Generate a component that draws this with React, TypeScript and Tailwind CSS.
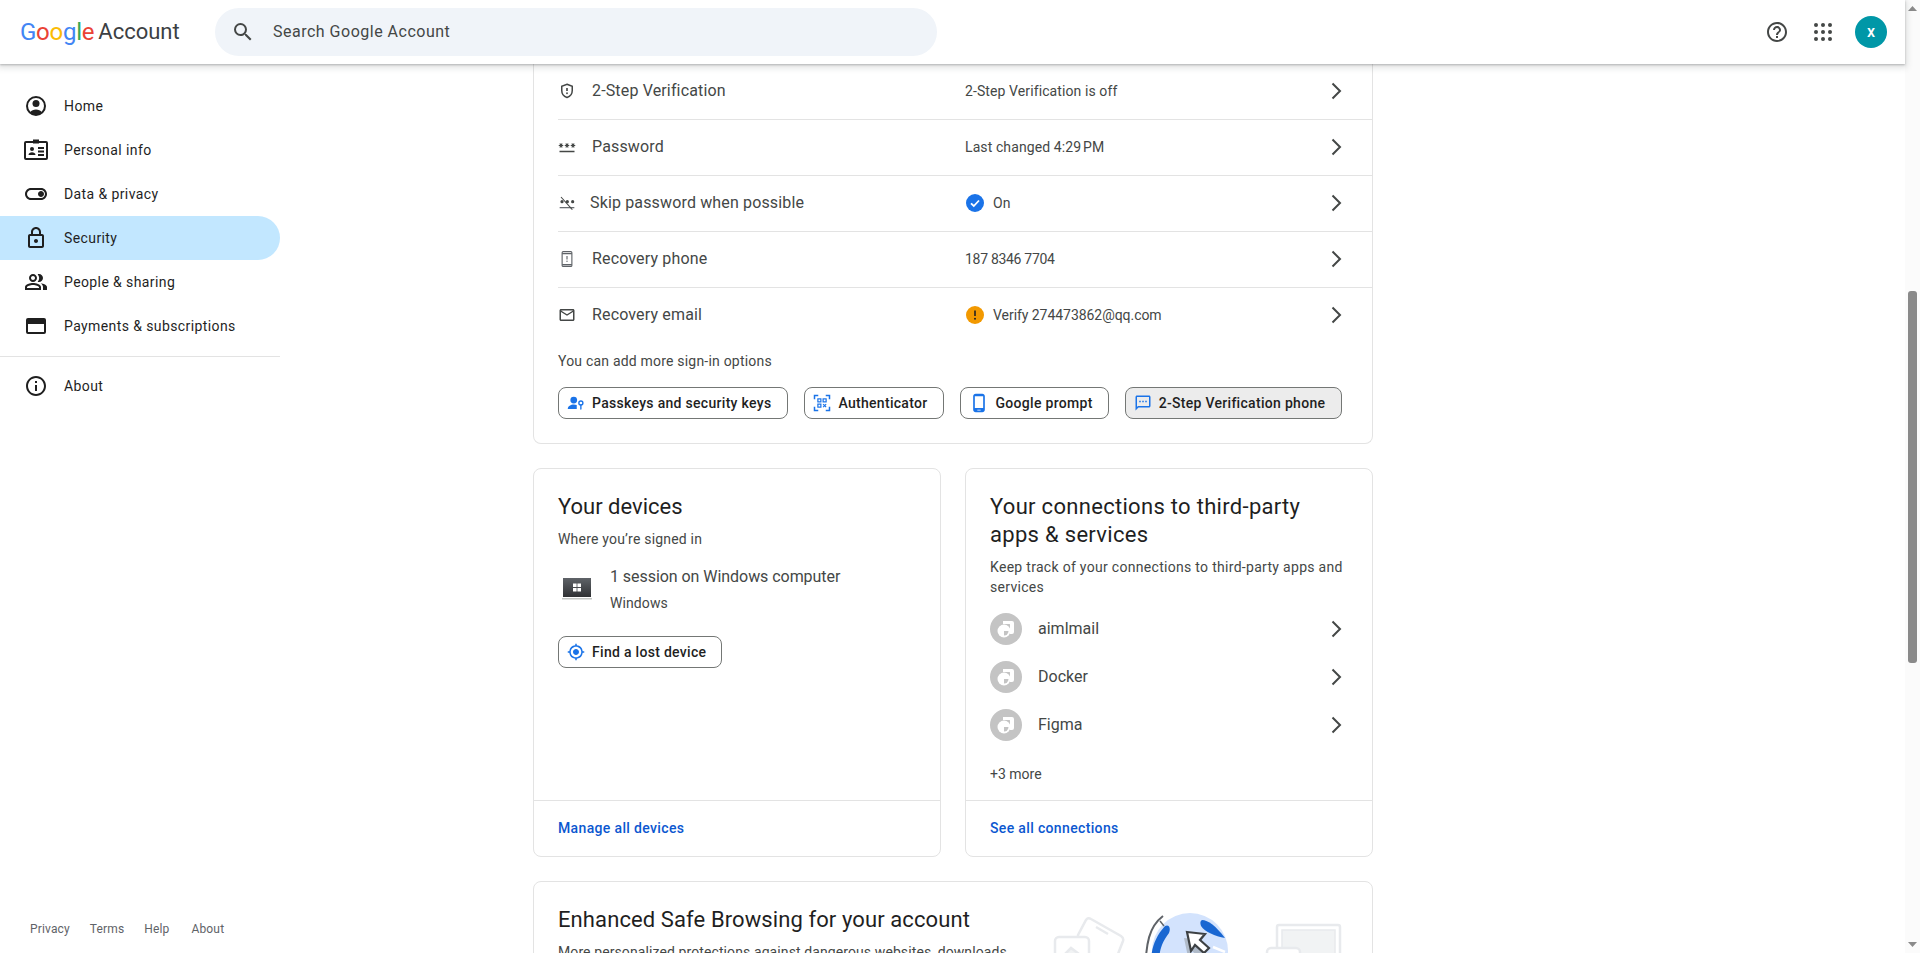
import { ReactNode } from "react";
import {
  MdSearch,
  MdHelpOutline,
  MdInfoOutline,
  MdOutlineLock,
  MdOutlineToggleOn,
  MdOutlinePeopleAlt,
  MdOutlinePassword,
  MdOutlineMailOutline,
  MdOutlineSms,
  MdOutlinePhoneAndroid,
  MdOutlineMyLocation,
} from "react-icons/md";

/* ---------- small drawn icons ---------- */

function HomeIcon() {
  return (
    <svg viewBox="0 0 24 24" className="w-6 h-6" fill="none">
      <circle cx="12" cy="12" r="9" stroke="#1f1f1f" strokeWidth="2" />
      <circle cx="12" cy="9.5" r="3.5" fill="#1f1f1f" />
      <path d="M6 18.2c1.5-1.7 3.6-2.7 6-2.7s4.500 1 6 2.700c-1.500 1.800-3.700 2.800-6 2.800s-4.500-1-6-2.800z" fill="#1f1f1f" />
    </svg>
  );
}

function IdCardIcon() {
  return (
    <svg viewBox="0 0 24 24" className="w-6 h-6" fill="none">
      <rect x="1" y="4" width="22" height="17" stroke="#1f1f1f" strokeWidth="2" rx="1" />
      <path d="M9 1.500h6v4H9z" fill="#1f1f1f" />
      <circle cx="8" cy="11" r="2" fill="#1f1f1f" />
      <path d="M4.500 17c0-1.800 1.800-2.800 3.500-2.800s3.500 1 3.500 2.800z" fill="#1f1f1f" />
      <path d="M14 10h6M14 13.500h6M14 17h6" stroke="#1f1f1f" strokeWidth="1.800" />
    </svg>
  );
}

function CardIcon() {
  return (
    <svg viewBox="0 0 24 24" className="w-6 h-6" fill="none">
      <rect x="3" y="5" width="18" height="14" stroke="#1f1f1f" strokeWidth="2" rx="1" />
      <rect x="3" y="5" width="18" height="5" fill="#1f1f1f" />
    </svg>
  );
}

function ShieldIcon() {
  return (
    <svg viewBox="0 0 24 24" className="w-[18px] h-[18px]" fill="none">
      <path d="M12 3l7 2.600v5.700c0 4.400-3 8-7 9.400-4-1.400-7-5-7-9.400V5.600z" stroke="#444746" strokeWidth="2" />
      <path d="M12 8v4" stroke="#444746" strokeWidth="2.200" />
      <circle cx="12" cy="15" r="1.200" fill="#444746" />
    </svg>
  );
}

function SkipPasswordIcon() {
  return (
    <svg viewBox="0 0 24 24" className="w-4 h-4" fill="none">
      <path d="M1 19h22" stroke="#5f6368" strokeWidth="1.800" />
      <circle cx="4.500" cy="10" r="2.400" fill="#444746" />
      <circle cx="12.500" cy="10" r="2.400" fill="#444746" />
      <circle cx="20.500" cy="10" r="2.400" fill="#444746" />
      <path d="M3 3l17 19" stroke="#444746" strokeWidth="1.600" />
    </svg>
  );
}

function PhoneAlertIcon() {
  return (
    <svg viewBox="0 0 24 24" className="w-[18px] h-[18px]" fill="none">
      <rect x="5.500" y="2" width="13" height="20" rx="1.500" stroke="#5f6368" strokeWidth="1.500" />
      <path d="M5.500 4.500h13M5.500 19.500h13" stroke="#5f6368" strokeWidth="2" />
      <path d="M12 8v4.500" stroke="#5f6368" strokeWidth="1.500" />
      <circle cx="12" cy="15" r="0.900" fill="#5f6368" />
    </svg>
  );
}

function Chevron() {
  return (
    <svg viewBox="0 0 24 24" className="w-6 h-6 shrink-0" fill="none">
      <path d="M8.500 4.500L16 12l-7.500 7.500" stroke="#444746" strokeWidth="2" />
    </svg>
  );
}

function GoogleApps() {
  return (
    <svg viewBox="0 0 24 24" className="w-6 h-6" fill="#444746">
      {[5, 12, 19].map((y) =>
        [5, 12, 19].map((x) => <circle key={`${x}-${y}`} cx={x} cy={y} r="2" />)
      )}
    </svg>
  );
}

function PasskeyIcon() {
  return (
    <svg viewBox="0 0 24 24" className="w-[18px] h-[18px]" fill="#1a73e8">
      <circle cx="9" cy="8" r="4.500" />
      <path d="M1 20c0-4 4-6 8-6 1.500 0 2.800.3 4 .8V20z" />
      <circle cx="18.500" cy="12" r="2.700" fill="none" stroke="#1a73e8" strokeWidth="1.800" />
      <path d="M17.600 14h1.800v6l-.9 1.200-.9-1.200z" />
    </svg>
  );
}

function AuthenticatorIcon() {
  return (
    <svg viewBox="0 0 24 24" className="w-[18px] h-[18px]" fill="none" stroke="#1a73e8" strokeWidth="2">
      <path d="M2 7V2h5M17 2h5v5M2 17v5h5M22 17v5h-5" />
      <rect x="6.500" y="6.500" width="4" height="4" strokeWidth="1.600" />
      <rect x="13.500" y="6.500" width="4" height="4" strokeWidth="1.600" />
      <rect x="6.500" y="13.500" width="4" height="4" strokeWidth="1.600" />
      <path d="M13.500 13.500l4 4M17.500 13.500l-4 4" strokeWidth="1.600" />
    </svg>
  );
}

function CheckBadge() {
  return (
    <svg viewBox="0 0 18 18" className="ml-px w-[18px] h-[18px] shrink-0">
      <circle cx="9" cy="9" r="9" fill="#1a73e8" />
      <path d="M5 9.300l2.800 2.700L13 6.500" fill="none" stroke="#fff" strokeWidth="1.800" />
    </svg>
  );
}

function WarnBadge() {
  return (
    <svg viewBox="0 0 18 18" className="ml-px w-[18px] h-[18px] shrink-0">
      <circle cx="9" cy="9" r="9" fill="#f29900" />
      <path d="M9 4.500v5.500" stroke="#202124" strokeWidth="1.600" />
      <circle cx="9" cy="12.800" r="1" fill="#202124" />
    </svg>
  );
}

function LaptopIcon() {
  return (
    <svg viewBox="0 0 30 22" className="w-[30px] h-[22px]">
      <defs>
        <linearGradient id="lap" x1="0" y1="0" x2="0" y2="1">
          <stop offset="0" stopColor="#5f6368" />
          <stop offset="1" stopColor="#2f3134" />
        </linearGradient>
      </defs>
      <rect x="1" y="0" width="28" height="19" fill="url(#lap)" />
      <rect x="0" y="20" width="30" height="1.500" fill="#c4c7c5" />
      <path d="M11 5.500h3.600v3.600H11zM15.400 5.500H19v3.600h-3.600zM11 9.900h3.600v3.600H11zM15.400 9.900H19v3.600h-3.600z" fill="#fff" />
    </svg>
  );
}

function AppBadge() {
  return (
    <svg viewBox="0 0 32 32" className="w-8 h-8 shrink-0">
      <circle cx="16" cy="16" r="16" fill="#c4c4c4" />
      <path d="M13 8h9a2 2 0 012 2v9a2 2 0 01-2 2h-2v-9.500a.500.500 0 00-.500-.500H13z" fill="#fff" />
      <circle cx="14" cy="18" r="6.500" fill="#fff" />
      <path d="M14 18h4.500a4.500 4.500 0 01-4.500 4.500z" fill="#c4c4c4" />
    </svg>
  );
}

function SafeBrowsingArt() {
  return (
    <svg viewBox="0 0 300 71" className="w-[300px] h-[71px] shrink-0" fill="none">
      {/* left documents */}
      <g stroke="#e8eaed" strokeWidth="2.500">
        <path d="M25 23L33 8q2-3 5-1l30 17q3 2 2 5L58 60H25z" fill="#fff" />
        <path d="M43 15l12 7" />
        <rect x="2" y="25" width="34" height="60" rx="4" fill="#fff" />
        <path d="M10 44l8-8 8 6v30H10z" fill="#f1f3f4" />
      </g>
      {/* globe */}
      <circle cx="137" cy="39" r="38" fill="#d3e3fd" />
      <path d="M112 14c4-2 6 2 4 7-6 8-10 16-10 30H98c0-14 4-26 14-37z" fill="#1967d2" />
      <path d="M149 8c6 0 14 6 23 18-10-2-20-6-24-12-1-3-1-5 1-6z" fill="#1967d2" />
      <path d="M110 4C97 14 92 28 92 71" stroke="#5f6368" strokeWidth="2" />
      <path d="M111 14l-4-5" stroke="#5f6368" strokeWidth="1.500" />
      <path d="M131 26l18 2-5 6 9 8-5 5-9-8-4 6z" fill="#9aa0a6" opacity="0.6" />
      <path d="M134 20l18 2-5 6 9 8-5 5-9-8-4 6z" fill="#fff" stroke="#3c4043" strokeWidth="2.200" />
      <path d="M160 35l12 5" stroke="#fff" strokeWidth="2.500" />
      {/* monitor */}
      <g stroke="#e8eaed" strokeWidth="2.500">
        <rect x="224" y="13" width="63" height="70" rx="2" fill="#fff" />
        <rect x="229" y="18" width="53" height="60" fill="#f1f3f4" strokeWidth="1.500" />
        <rect x="214" y="36" width="33" height="44" rx="4" fill="#fff" />
      </g>
    </svg>
  );
}

/* ---------- data ---------- */

const navItems: { label: string; icon: ReactNode; active?: boolean }[] = [
  { label: "Home", icon: <HomeIcon /> },
  { label: "Personal info", icon: <IdCardIcon /> },
  { label: "Data & privacy", icon: <MdOutlineToggleOn className="w-7 h-7 text-[#1f1f1f]" /> },
  { label: "Security", icon: <MdOutlineLock className="w-6 h-6 text-[#1f1f1f]" />, active: true },
  { label: "People & sharing", icon: <MdOutlinePeopleAlt className="w-6 h-6 text-[#1f1f1f]" /> },
  { label: "Payments & subscriptions", icon: <CardIcon /> },
];

function NavRow({ label, icon, active }: { label: string; icon: ReactNode; active?: boolean }) {
  return (
    <a
      className={
        "flex items-center h-11 pl-6 rounded-r-full text-sm font-[450] tracking-[0.4px] text-[#1f1f1f] " +
        (active ? "bg-[#c2e7ff]" : "")
      }
    >
      <span className="w-6 h-6 flex items-center justify-center">{icon}</span>
      <span className="ml-4">{label}</span>
    </a>
  );
}

function SignInRow({
  icon,
  title,
  value,
  tight,
  last,
}: {
  icon: ReactNode;
  title: string;
  value: ReactNode;
  tight?: boolean;
  last?: boolean;
}) {
  return (
    <div
      className={
        "flex items-center pr-6 " +
        (last ? "h-14 pb-[2px]" : "h-14 pb-px border-b border-[#e3e3e3]")
      }
    >
      <span className="w-[18px] h-[18px] flex items-center justify-center shrink-0">{icon}</span>
      <span className={"text-base tracking-[0.15px] text-[#444746] w-[373px] " + (tight ? "ml-3.5" : "ml-4")}>
        {title}
      </span>
      <div className={"flex-1 flex items-center text-sm tracking-[0.1px] text-[#444746] " + (tight ? "ml-0.5" : "")}>
        {value}
      </div>
      <Chevron />
    </div>
  );
}

function OptionButton({
  icon,
  label,
  active,
  className = "pr-4",
}: {
  icon: ReactNode;
  label: string;
  active?: boolean;
  className?: string;
}) {
  return (
    <button
      className={
        "flex items-center h-8 pl-2 gap-[7px] rounded-lg border border-[#747775] text-sm font-[470] tracking-[0.3px] text-[#1f1f1f] " +
        className +
        (active ? " bg-[#ececec]" : " bg-white")
      }
    >
      {icon}
      {label}
    </button>
  );
}

export default function App() {
  return (
    <div className="h-[953px] w-full flex overflow-hidden bg-white font-[family-name:Roboto,sans-serif]">
      <div className="flex-1 min-w-0 flex flex-col">
        {/* top bar */}
        <header className="relative z-10 h-16 shrink-0 flex items-center bg-white pr-[18px] shadow-[0_1px_2px_rgba(60,64,67,0.3),0_2px_6px_2px_rgba(60,64,67,0.15)]">
          <div className="w-[215px] pl-5 flex items-center text-[24px] leading-none">
            <span className="tracking-[-0.25px]">
              <span className="text-[#4285f4]">G</span>
              <span className="text-[#ea4335]">o</span>
              <span className="text-[#fbbc05]">o</span>
              <span className="text-[#4285f4]">g</span>
              <span className="text-[#34a853]">l</span>
              <span className="text-[#ea4335]">e</span>
            </span>
            <span className="ml-1 text-[22px] text-[#3c4043]">Account</span>
          </div>
          <div className="w-[722px] h-12 flex items-center rounded-3xl bg-[#f0f4f9] pl-4 text-base text-[#444746]">
            <MdSearch className="w-6 h-6 text-[#444746]" />
            <span className="ml-[18px] tracking-[0.5px]">Search Google Account</span>
          </div>
          <div className="ml-auto flex items-center gap-[22px]">
            <MdHelpOutline className="w-6 h-6 text-[#444746]" />
            <GoogleApps />
            <div className="-ml-[2px] w-8 h-8 rounded-full bg-[#0097a7] flex items-center justify-center text-white text-base font-medium">
              x
            </div>
          </div>
        </header>

        <div className="flex-1 min-h-0 flex overflow-hidden">
          {/* sidebar */}
          <aside className="w-[280px] shrink-0 flex flex-col pt-5 pb-4">
            <nav className="flex flex-col">
              {navItems.map((n) => (
                <NavRow key={n.label} {...n} />
              ))}
            </nav>
            <div className="mt-2 pt-[7px] border-t border-[#e3e3e3]">
              <NavRow label="About" icon={<MdInfoOutline className="w-6 h-6 text-[#1f1f1f]" />} />
            </div>
            <div className="mt-auto pl-[30px] flex gap-5 text-xs tracking-[0.15px] text-[#5f6368]">
              <span>Privacy</span>
              <span>Terms</span>
              <span>Help</span>
              <span className="ml-[2px]">About</span>
            </div>
          </aside>

          {/* main column */}
          <main className="ml-[253px] w-[840px] shrink-0 flex flex-col gap-6">
            <section className="shrink-0 rounded-b-lg border border-t-0 border-[#e3e3e3] pl-6 pb-6">
              <SignInRow icon={<ShieldIcon />} title="2-Step Verification" value="2-Step Verification is off" />
              <SignInRow
                icon={<MdOutlinePassword className="w-[18px] h-[18px] text-[#444746]" />}
                title="Password"
                value={"Last changed 4:29\u202fPM"}
              />
              <SignInRow
                tight
                icon={<SkipPasswordIcon />}
                title="Skip password when possible"
                value={
                  <>
                    <CheckBadge />
                    <span className="ml-[9px]">On</span>
                  </>
                }
              />
              <SignInRow
                icon={<PhoneAlertIcon />}
                title="Recovery phone"
                value={<span className="tracking-[-0.3px]">187 8346 7704</span>}
              />
              <SignInRow
                last
                icon={<MdOutlineMailOutline className="w-[18px] h-[18px] text-[#444746]" />}
                title="Recovery email"
                value={
                  <>
                    <WarnBadge />
                    <span className="ml-[9px] tracking-[-0.05px]">Verify 274473862@qq.com</span>
                  </>
                }
              />
              <p className="mt-[7px] text-sm leading-5 tracking-[0.2px] text-[#444746]">
                You can add more sign-in options
              </p>
              <div className="mt-4 flex gap-4">
                <OptionButton icon={<PasskeyIcon />} label="Passkeys and security keys" />
                <OptionButton icon={<AuthenticatorIcon />} label="Authenticator" className="pr-[15px]" />
                <OptionButton
                  icon={<MdOutlinePhoneAndroid className="w-5 h-5 text-[#1a73e8]" />}
                  label="Google prompt"
                  className="pr-[15px]"
                />
                <OptionButton
                  active
                  icon={<MdOutlineSms className="w-[18px] h-[18px] text-[#1a73e8]" />}
                  label="2-Step Verification phone"
                />
              </div>
            </section>

            <div className="shrink-0 grid grid-cols-2 gap-6">
              <section className="rounded-lg border border-[#e3e3e3] flex flex-col">
                <div className="flex-1 px-6 pt-6">
                  <h2 className="text-[22px] leading-7 text-[#1f1f1f]">Your devices</h2>
                  <p className="mt-2 text-sm leading-5 tracking-[0.2px] text-[#444746]">Where you’re signed in</p>
                  <div className="mt-4 flex items-center">
                    <span className="ml-1 mr-[18px]">
                      <LaptopIcon />
                    </span>
                    <div>
                      <div className="text-base leading-6 tracking-[-0.05px] text-[#444746]">
                        1 session on Windows computer
                      </div>
                      <div className="mt-1 text-sm leading-5 tracking-[0.1px] text-[#444746]">Windows</div>
                    </div>
                  </div>
                  <button className="mt-[23px] h-8 pl-2 pr-[15px] flex items-center gap-[7px] rounded-lg border border-[#747775] text-sm font-[470] tracking-[0.3px] text-[#1f1f1f]">
                    <MdOutlineMyLocation className="w-[18px] h-[18px] text-[#1a73e8]" />
                    Find a lost device
                  </button>
                </div>
                <div className="h-14 pb-px px-6 flex items-center border-t border-[#e3e3e3] text-sm font-[470] tracking-[0.35px] text-[#0b57d0]">
                  Manage all devices
                </div>
              </section>

              <section className="rounded-lg border border-[#e3e3e3] flex flex-col">
                <div className="flex-1 pl-6 pr-6 pt-6 pb-4">
                  <h2 className="text-[22px] leading-7 tracking-[0.3px] text-[#1f1f1f]">
                    Your connections to third-party
                    <br />
                    apps &amp; services
                  </h2>
                  <p className="mt-2 text-sm leading-5 tracking-[0.3px] text-[#444746]">
                    Keep track of your connections to third-party apps and services
                  </p>
                  <div className="mt-2">
                    {["aimlmail", "Docker", "Figma"].map((a) => (
                      <div key={a} className="h-12 flex items-center">
                        <AppBadge />
                        <span className="ml-4 flex-1 text-base text-[#444746]">{a}</span>
                        <Chevron />
                      </div>
                    ))}
                  </div>
                  <p className="mt-[15px] text-sm leading-5 text-[#444746]">+3 more</p>
                </div>
                <div className="h-14 pb-px px-6 flex items-center border-t border-[#e3e3e3] text-sm font-[470] tracking-[0.35px] text-[#0b57d0]">
                  See all connections
                </div>
              </section>
            </div>

            <section className="shrink-0 rounded-t-lg border border-[#e3e3e3] h-[200px] pl-6 flex items-start">
              <div className="w-[480px] pt-6">
                <h2 className="text-[22px] leading-7 tracking-[0.1px] text-[#1f1f1f]">
                  Enhanced Safe Browsing for your account
                </h2>
                <p className="mt-2 text-sm leading-5 tracking-[0.1px] text-[#444746] whitespace-nowrap">
                  More personalized protections against dangerous websites, downloads
                </p>
              </div>
              <div className="ml-[15px] pt-[30px]">
                <SafeBrowsingArt />
              </div>
            </section>
          </main>
        </div>
      </div>

      {/* browser scrollbar */}
      <div className="w-[15px] shrink-0 h-full flex flex-col items-center bg-[#fbfbfb]">
        <svg viewBox="0 0 9 5" className="w-[9px] h-[5px] mt-[6px] shrink-0">
          <path d="M4.500 0L9 5H0z" fill="#8a8a8a" />
        </svg>
        <div className="mt-[280px] w-[9px] h-[372px] rounded-[3px] bg-[#8a8a8a]" />
        <svg viewBox="0 0 9 5" className="w-[9px] h-[5px] mt-auto mb-[6px] shrink-0">
          <path d="M4.500 5L9 0H0z" fill="#8a8a8a" />
        </svg>
      </div>
    </div>
  );
}
